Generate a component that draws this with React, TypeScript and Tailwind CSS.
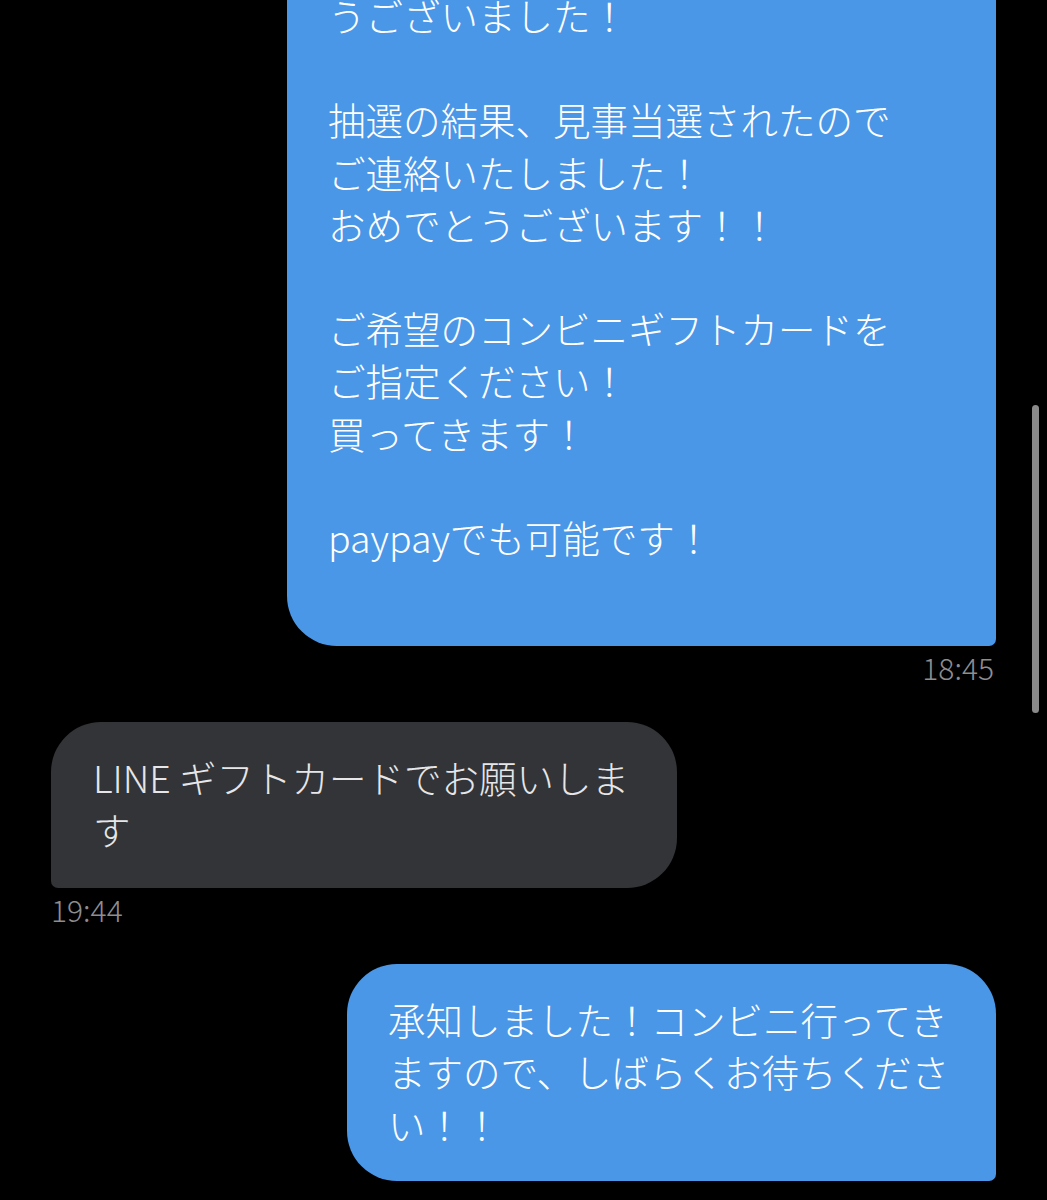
import React from 'react'

const font = { fontFamily: '"Noto Sans CJK JP", "Noto Sans", sans-serif' }

function SentBubble({ lines, className = '' }: { lines: string[]; className?: string }) {
    return (
        <div className={`bg-[#4a97e7] text-white rounded-[50px] rounded-br-[7px] pl-[41px] pr-[44px] ${className}`}>
            {lines.map((l, i) => (
                <div key={i} className="h-[52.2px] leading-[52.2px] whitespace-pre">{l || '\u00a0'}</div>
            ))}
        </div>
    )
}

export default function App() {
    return (
        <div className="relative w-[1047px] h-[1200px] bg-black overflow-hidden text-[37.5px] font-light" style={font}>
            <div className="flex flex-col px-[51px]">
                {/* 上のメッセージ(途中から表示) */}
                <div className="flex justify-end">
                    <SentBubble
                        className="w-[709px] rounded-t-none -mt-[11px] pb-[31px]"
                        lines={[
                            'うございました！',
                            '',
                            '抽選の結果、見事当選されたので',
                            'ご連絡いたしました！',
                            'おめでとうございます！！',
                            '',
                            'ご希望のコンビニギフトカードを',
                            'ご指定ください！',
                            '買ってきます！',
                            '',
                            'paypayでも可能です！',
                            '',
                        ]}
                    />
                </div>
                <div className="text-right text-[30px] leading-[34px] text-[#8d8d92] mt-[4px] pr-[2px]">18:45</div>

                {/* 受信メッセージ */}
                <div className="mt-[38px] flex">
                    <div className="w-[626px] h-[166px] bg-[#323437] text-[#e6e6e8] rounded-[50px] rounded-bl-[7px] pl-[42px] pt-[29px]">
                        <div className="h-[52px] leading-[52px] whitespace-pre">LINE ギフトカードでお願いしま</div>
                        <div className="h-[52px] leading-[52px] whitespace-pre">す</div>
                    </div>
                </div>
                <div className="text-[30px] leading-[34px] text-[#8d8d92] mt-[4px]">19:44</div>

                {/* 送信メッセージ */}
                <div className="mt-[38px] flex justify-end">
                    <SentBubble
                        className="w-[649px] h-[217px] pt-[29px]"
                        lines={[
                            '承知しました！コンビニ行ってき',
                            'ますので、しばらくお待ちくださ',
                            'い！！',
                        ]}
                    />
                </div>
            </div>

            {/* スクロールバー */}
            <div className="absolute left-[1032px] top-[405px] w-[7px] h-[308px] rounded-full bg-[#8a8a8a]" />
        </div>
    )
}
